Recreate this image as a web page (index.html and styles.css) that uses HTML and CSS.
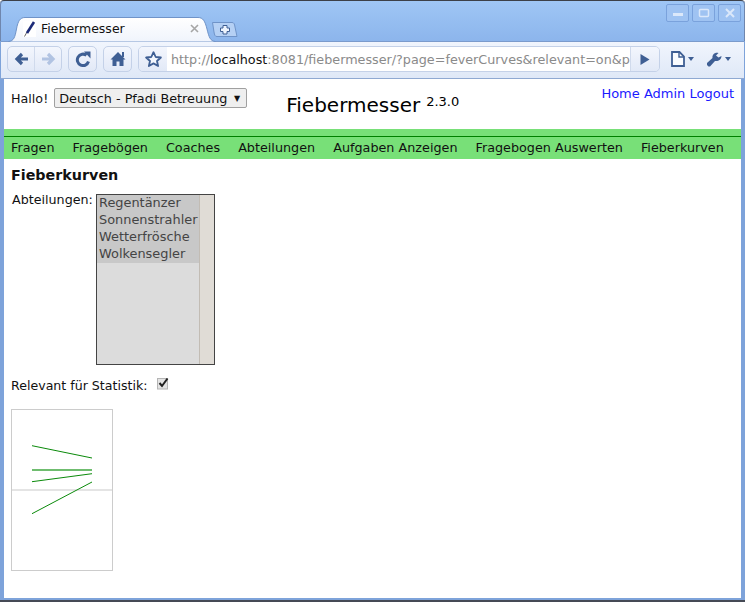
FILE: index.html
```html
<!DOCTYPE html>
<html lang="de">
<head>
<meta charset="utf-8">
<title>Fiebermesser</title>
<link rel="stylesheet" href="styles.css">
</head>
<body>
<div class="window">
  <div class="titlebar">
    <div class="tab">
      <svg class="tab-shape" width="208" height="25" viewBox="0 0 208 25"><defs><linearGradient id="tabfill" x1="0" y1="0" x2="0" y2="1"><stop offset="0" stop-color="#ffffff"/><stop offset="1" stop-color="#f0f4fc"/></linearGradient></defs><path d="M0.500 24.500C6 24 7 20 8.500 12C10 4 12 0.500 17 0.500H190C195 0.500 197 4 199 12C201 20 202 24 207.500 24.500" fill="url(#tabfill)" stroke="#6f93c8"/></svg>
      <svg class="favicon" width="13" height="16" viewBox="0 0 13 16"><rect width="13" height="16" fill="#fff"/><path d="M1.500 15.500L4 11" stroke="#666" stroke-width="1"/><path d="M4 12L11 1" stroke="#1b2a78" stroke-width="2.600"/></svg>
      <span class="tab-title">Fiebermesser</span>
      <svg class="tab-close" width="9" height="9" viewBox="0 0 9 9"><path d="M1 1L8 8M8 1L1 8" stroke="#a6a6a6" stroke-width="1.600"/></svg>
    </div>
    <svg class="newtab" width="26" height="15" viewBox="0 0 26 15"><path d="M0.500 0.500H20C22 0.500 22.500 2 23 5L25 14.500H5C3 14.500 2.500 13 2 10Z" fill="#b5d0f4" stroke="#6f93c8"/><path d="M11 3.500H15V6H17.500V9.500H15V12H11V9.500H8.500V6H11Z" fill="#eef4fd" stroke="#3f5f94"/></svg>
    <div class="winctl">
      <div class="winbtn"><svg width="12" height="12" viewBox="0 0 12 12"><rect x="1" y="6" width="10" height="3" fill="#dbe8fa"/></svg></div>
      <div class="winbtn"><svg width="12" height="12" viewBox="0 0 12 12"><rect x="1.500" y="2.500" width="9" height="7" rx="1" fill="none" stroke="#dbe8fa" stroke-width="1.500"/></svg></div>
      <div class="winbtn"><svg width="12" height="12" viewBox="0 0 12 12"><path d="M2 2L10 10M10 2L2 10" stroke="#dbe8fa" stroke-width="2"/></svg></div>
    </div>
  </div>
  <div class="toolbar">
    <div class="tbtn tbtn-nav">
      <div class="navcell navcell-back"><svg width="15" height="14" viewBox="0 0 15 14"><path d="M14 7H4M8 2L3 7L8 12" fill="none" stroke="#3f5f94" stroke-width="3.200"/></svg></div>
      <div class="navcell"><svg width="15" height="14" viewBox="0 0 15 14"><path d="M1 7H11M7 2L12 7L7 12" fill="none" stroke="#b1c3e2" stroke-width="3.200"/></svg></div>
    </div>
    <div class="tbtn tbtn-one"><svg width="16" height="16" viewBox="0 0 16 16"><path d="M13.500 10.500A5.700 5.700 0 1 1 11.500 4.300" fill="none" stroke="#3f5f94" stroke-width="3"/><path d="M9 0.500H15.500V7.500Z" fill="#3f5f94"/></svg></div>
    <div class="tbtn tbtn-one"><svg width="16" height="16" viewBox="0 0 16 16"><path d="M8 1L15.500 8.500H13.500V15H9.500V10.500H6.500V15H2.500V8.500H0.500Z" fill="#3f5f94"/><rect x="12" y="1" width="2" height="5" fill="#3f5f94"/></svg></div>
    <div class="omnibox">
      <div class="star"><svg width="17" height="16" viewBox="0 0 17 16"><path d="M8.500 1.200L10.700 6L15.900 6.500L12 10L13.100 15L8.500 12.400L3.900 15L5 10L1.100 6.500L6.300 6Z" fill="#f4f7fd" stroke="#3f5f94" stroke-width="1.800" stroke-linejoin="round"/></svg></div>
      <div class="url"><span class="url-dim">http://</span><span class="url-host">localhost</span><span class="url-dim">:8081/fiebermesser/?page=feverCurves&amp;relevant=on&amp;p</span></div>
      <div class="go"><svg width="10" height="11" viewBox="0 0 10 11"><path d="M0.500 0L9.500 5.500L0.500 11Z" fill="#3f5f94"/></svg></div>
    </div>
    <div class="tools">
      <div class="tool"><svg width="14" height="16" viewBox="0 0 14 16"><path d="M1 1H8.500L13 5.500V15H1Z" fill="#fafcff" stroke="#3f5f94" stroke-width="1.800"/><path d="M8 1V6H13" fill="none" stroke="#3f5f94" stroke-width="1.400"/></svg><span class="caret"></span></div>
      <div class="tool"><svg width="16" height="16" viewBox="0 0 16 16"><path d="M1 14L2.500 15.500L4 15.500L9 10C12.500 10.500 15.500 8.500 15.500 5L12.500 6.500L10 4.500L12.500 2C9 1 6 3.500 6.500 7L1 12Z" fill="#3f5f94"/></svg><span class="caret"></span></div>
    </div>
  </div>
  <div class="page">
    <header class="head">
      <div class="greeting">
        <span>Hallo!</span>
        <div class="dropdown"><span>Deutsch - Pfadi Betreuung</span><span class="dropdown-arrow">▼</span></div>
      </div>
      <div class="brand"><span class="brand-name">Fiebermesser</span><span class="brand-ver">2.3.0</span></div>
      <nav class="links"><a href="#">Home</a> <a href="#">Admin</a> <a href="#">Logout</a></nav>
    </header>
    <nav class="menu">
      <a href="#">Fragen</a>
      <a href="#">Fragebögen</a>
      <a href="#">Coaches</a>
      <a href="#">Abteilungen</a>
      <a href="#">Aufgaben Anzeigen</a>
      <a href="#">Fragebogen Auswerten</a>
      <a href="#">Fieberkurven</a>
    </nav>
    <main class="content">
      <h2 class="heading">Fieberkurven</h2>
      <div class="field">
        <span class="field-label">Abteilungen:</span>
        <div class="listbox">
          <div class="options">
            <div class="option">Regentänzer</div>
            <div class="option">Sonnenstrahler</div>
            <div class="option">Wetterfrösche</div>
            <div class="option">Wolkensegler</div>
          </div>
          <div class="scrolltrack"></div>
        </div>
      </div>
      <div class="check-row">
        <span>Relevant für Statistik:</span>
        <svg class="check" width="12" height="13" viewBox="0 0 12 13"><rect x="0.500" y="1.500" width="10" height="10.500" fill="#e4e4e4" stroke="#b5b5b5"/><path d="M2.500 6L5 9L10.500 1.500" fill="none" stroke="#222" stroke-width="2"/></svg>
      </div>
      <svg class="chart" width="102" height="162" viewBox="0 0 102 162">
        <rect x="0.500" y="0.500" width="101" height="161" fill="#fff" stroke="#ccc"/>
        <rect x="1" y="80" width="100" height="2" fill="#e4e4e4"/>
        <g stroke="#0a8a0a" fill="none">
          <path d="M21 36.700L81 49"/>
          <path d="M21 61H81" stroke="#6fbd6f" stroke-width="2"/>
          <path d="M21 72.700L81 64.700"/>
          <path d="M21 104.700L81 73"/>
        </g>
      </svg>
    </main>
  </div>
</div>
</body>
</html>
```
FILE: styles.css
```css
* { box-sizing: border-box; }
html, body { margin: 0; padding: 0; height: 100%; overflow: hidden; }
body { font-family: "DejaVu Sans", sans-serif; font-size: 12.700px; color: #111; background: #fff; }
a { color: #1a1aff; text-decoration: none; }

.window {
  width: 745px; height: 602px; display: flex; flex-direction: column;
  background: #7ea3da; border-top: 1px solid #3c4048; border-bottom: 2px solid #454a55;
  border-radius: 4px 4px 0 0; padding-bottom: 2px;
}
.titlebar {
  height: 40px; flex: none; display: flex; align-items: flex-start;
  padding: 16px 4px 0 8px;
  background: linear-gradient(#9fc6f5, #8cb5ec);
  border-radius: 4px 4px 0 0;
  box-shadow: inset 1px 0 0 #6f86ad, inset -1px 0 0 #6f86ad;
  position: relative;
}
.tab { position: relative; width: 205px; height: 25px; display: flex; align-items: center; padding: 0 14px 2px 15px; z-index: 1; }
.tab-shape { position: absolute; left: 0; top: 0; }
.favicon, .tab-title, .tab-close { position: relative; }
.favicon { flex: none; }
.tab-title { margin-left: 5px; font-size: 12.500px; color: #111; flex: 1; }
.tab-close { flex: none; }
.newtab { margin: 5px 0 0 -1px; flex: none; }
.winctl { margin: -13px 0 0 auto; display: flex; gap: 3px; }
.winbtn {
  width: 23px; height: 18px; display: flex; align-items: center; justify-content: center;
  border: 1px solid #7aa2dc; border-radius: 2px; background: #9fc3f2;
}

.toolbar {
  height: 38px; flex: none; display: flex; align-items: flex-start; padding: 4px 7px 0 6px;
  margin: 0 1px 0 1px;
  background: linear-gradient(#f1f5fd, #dfe8f7);
  border-top: 1px solid #7b9bcc; border-bottom: 1px solid #8fa9d2;
}
.tbtn {
  height: 26px; display: flex; align-items: center; justify-content: center;
  border: 1px solid #c4d1e8; border-radius: 5px; background: linear-gradient(#f3f6fd, #e2e9f7);
}
.tbtn-nav { width: 55px; }
.navcell { flex: 1; height: 100%; display: flex; align-items: center; justify-content: center; }
.navcell-back { border-right: 1px solid #d0daec; }
.tbtn-one { width: 29px; margin-left: 6px; }
.omnibox {
  margin-left: 6px; width: 522px; height: 26px; display: flex; align-items: stretch;
  border: 1px solid #c4d1e8; border-radius: 5px; overflow: hidden;
}
.star { width: 28px; flex: none; display: flex; align-items: center; justify-content: center; background: linear-gradient(#f3f6fd, #e2e9f7); }
.url {
  flex: 1; min-width: 0; background: #fff; overflow: hidden; white-space: nowrap;
  font-size: 12.750px; line-height: 25px; padding-left: 4px;
}
.url-dim { color: #8a8a8a; }
.url-host { color: #111; }
.go { width: 29px; flex: none; display: flex; align-items: center; justify-content: center; background: linear-gradient(#f3f6fd, #e2e9f7); border-left: 1px solid #d0daec; }
.tools { display: flex; margin-left: 11px; gap: 12px; height: 26px; align-items: center; }
.tool { display: flex; align-items: center; gap: 2px; }
.caret { width: 0; height: 0; border: 3.500px solid transparent; border-top: 4px solid #3f5f94; border-bottom: 0; margin-left: 1px; }

.page { flex: 1; min-height: 0; margin: 0 4px; background: #fff; display: flex; flex-direction: column; }
.head { height: 50px; flex: none; display: flex; align-items: flex-start; padding: 9px 7px 0 7px; }
.greeting { display: flex; align-items: center; gap: 6px; }
.dropdown {
  width: 193px; height: 20px; display: flex; align-items: center; justify-content: space-between;
  padding: 0 6px 0 4px; border: 1px solid #a0a0a0; border-radius: 2px; background: #efefef; white-space: nowrap;
  font-size: 12.800px;
}
.dropdown-arrow { font-size: 8px; color: #111; }
.brand { margin-left: 39px; padding-top: 5px; display: flex; align-items: flex-start; }
.brand-name { font-size: 20px; line-height: 24px; color: #000; }
.brand-ver { font-size: 13px; line-height: 16px; margin: 1px 0 0 6px; color: #000; }
.links { margin-left: auto; margin-top: -2px; line-height: 16px; font-size: 13px; }

.menu {
  height: 30px; flex: none; display: flex; gap: 18px; padding: 8px 7px 0 7px;
  background: linear-gradient(#78e078 0, #78e078 7px, #008000 7px, #008000 8px, #78e078 8px);
  line-height: 20px; align-items: center; font-size: 12.770px; white-space: nowrap;
}
.menu a { color: #111; }
.content { padding: 7px 7px 0 7px; }
.heading { margin: 0; font-size: 14.300px; line-height: 18px; font-weight: bold; color: #111; }
.field { display: flex; align-items: flex-start; margin-top: 10px; }
.field-label { width: 85px; padding: 0 0 0 1px; margin-top: -2px; }
.listbox { width: 119px; height: 171px; display: flex; border: 1px solid #444; background: #dcdcdc; color: #444; font-size: 12.900px; }
.options { flex: 1; }
.option { height: 17px; line-height: 16px; padding-left: 2px; background: #c8c8c8; white-space: nowrap; }
.scrolltrack { width: 15px; flex: none; background: #e0dcd6; border-left: 1px solid #c2bcb4; }
.check-row { display: flex; align-items: flex-start; gap: 9px; margin-top: 13px; height: 16px; font-size: 12.600px; }
.check { margin-top: -1px; }
.chart { display: block; margin-top: 15px; }
```
